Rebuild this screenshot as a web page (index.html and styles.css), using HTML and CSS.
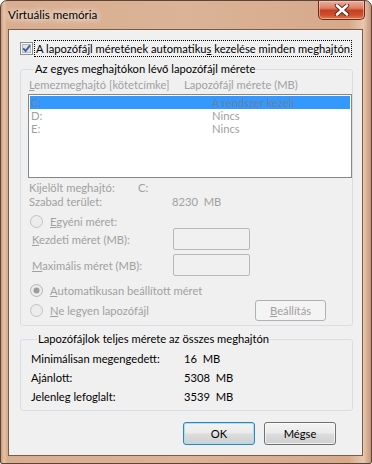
FILE: index.html
```html
<!DOCTYPE html>
<html lang="hu">
<head>
  <meta charset="UTF-8" />
  <title>Virtuális memória</title>
  <link rel="stylesheet" href="styles.css">
</head>
<body>
  <div class="window">
    <div class="titlebar">
      <span class="title">Virtuális memória</span>
      <span class="close">
        <svg width="16" height="12" viewBox="0 0 16 12">
          <path d="M3 1.5 L13 10.5 M13 1.5 L3 10.5" stroke="#5a2418" stroke-width="4.4" stroke-linecap="round"/>
          <path d="M3 1.5 L13 10.5 M13 1.5 L3 10.5" stroke="#fff" stroke-width="2.6" stroke-linecap="round"/>
        </svg>
      </span>
    </div>

    <div class="client">
      <div class="autorow">
        <svg class="check" width="13" height="13" viewBox="0 0 13 13">
          <rect x="0.5" y="0.5" width="12" height="12" fill="#f6f6f6" stroke="#8e8f8f"/>
          <rect x="2.5" y="2.5" width="8" height="8" fill="#dfe4ea" stroke="#b4b9bf"/>
          <path d="M3.2 6.4 L5.6 9 L10 3.4" fill="none" stroke="#4a5f97" stroke-width="1.9"/>
        </svg>
        <span class="focus">A lapozófájl méretének automatiku<u>s</u> kezelése minden meghajtón</span>
      </div>

      <fieldset class="group drives">
        <legend>Az egyes meghajtókon lévő lapozófájl mérete</legend>
        <div class="cols off">
          <span class="c1"><u>L</u>emezmeghajtó [kötetcímke]</span>
          <span>Lapozófájl mérete (MB)</span>
        </div>
        <ul class="list">
          <li class="sel"><span class="d">C:</span><span>A rendszer kezeli</span></li>
          <li><span class="d">D:</span><span>Nincs</span></li>
          <li><span class="d">E:</span><span>Nincs</span></li>
        </ul>

        <div class="info off">
          <div class="irow"><span class="k1">Kijelölt meghajtó:</span><span>C:</span></div>
          <div class="irow"><span class="k2">Szabad terület:</span><span>8230&nbsp; MB</span></div>
        </div>

        <div class="radio r-custom off">
          <svg width="13" height="13" viewBox="0 0 13 13"><circle cx="6.5" cy="6.5" r="6" fill="#ececec" stroke="#c0c0c0"/></svg>
          <span><u>E</u>gyéni méret:</span>
        </div>
        <div class="field f-init off">
          <span class="lbl"><u>K</u>ezdeti méret (MB):</span>
          <span class="box"></span>
        </div>
        <div class="field f-max off">
          <span class="lbl"><u>M</u>aximális méret (MB):</span>
          <span class="box"></span>
        </div>
        <div class="radio r-auto off">
          <svg width="13" height="13" viewBox="0 0 13 13"><circle cx="6.5" cy="6.5" r="6" fill="#ececec" stroke="#b4b4b4"/><circle cx="6.5" cy="6.5" r="3" fill="#9c9c9c"/></svg>
          <span><u>A</u>utomatikusan beállított méret</span>
        </div>
        <div class="radio r-none off">
          <svg width="13" height="13" viewBox="0 0 13 13"><circle cx="6.5" cy="6.5" r="6" fill="#ececec" stroke="#c0c0c0"/></svg>
          <span class="grow"><u>N</u>e legyen lapozófájl</span>
          <span class="btn disabled set"><u>B</u>eállítás</span>
        </div>
      </fieldset>

      <fieldset class="group totals">
        <legend>Lapozófájlok teljes mérete az összes meghajtón</legend>
        <div class="trow"><span class="k">Minimálisan megengedett:</span><span>16&nbsp; MB</span></div>
        <div class="trow"><span class="k">Ajánlott:</span><span>5308&nbsp; MB</span></div>
        <div class="trow"><span class="k">Jelenleg lefoglalt:</span><span>3539&nbsp; MB</span></div>
      </fieldset>

      <div class="buttons">
        <span class="btn default">OK</span>
        <span class="btn">Mégse</span>
      </div>
    </div>
  </div>
</body>
</html>
```

FILE: styles.css
```css
body{margin:0;width:372px;height:464px;overflow:hidden;background:#fff;font-family:Lato,"Liberation Sans",sans-serif;font-size:11.2px;color:#000;white-space:nowrap;}
u{text-decoration:underline;text-underline-offset:1px;}

.window{box-sizing:border-box;height:464px;padding:0 8px 8px 7px;border:1px solid #5b4538;border-radius:7px 7px 2px 2px;
  background:linear-gradient(to right,#c99a7d 0,#e6c3a8 3px,#d9ad8f 6px,#dcb397 50%,#d6a98b 94%,#e8c7ad 98%,#c49377 100%);}
.titlebar{height:28px;display:flex;justify-content:space-between;align-items:flex-start;}
.title{margin-top:6px;line-height:16px;font-size:11.6px;text-shadow:0 0 6px #fff,0 0 10px #fff;}
.close{width:45px;height:18px;display:flex;align-items:center;justify-content:center;border:1px solid #6b2a1c;border-top:none;border-radius:0 0 5px 5px;margin-right:-2px;
  background:linear-gradient(#eab0a0 0,#dc7d66 40%,#c5401f 52%,#cf5230 80%,#e07a52 100%);box-shadow:inset 0 0 0 1px rgba(255,210,190,.55);}

.client{box-sizing:border-box;height:427px;background:#f0f0f0;border:1px solid #7a5a48;}

.autorow{display:flex;align-items:center;height:17px;margin:10px 0 0 11px;}
.check{display:block;flex-shrink:0;margin-right:1px;}
.focus{line-height:15px;padding:0 1px;border:1px dotted #000;}

.group{margin:0 9px 0 11px;padding:0;border:1px solid #d5dfe5;border-radius:3px;min-width:0;}
.group legend{margin-left:6px;padding:0 1px;line-height:14px;}
.drives{margin-top:5px;padding:0 0 4px 7px;}
.off{color:#a0a0a0;}

.cols{display:flex;height:14px;line-height:14px;margin-top:2px;padding-left:1px;}
.cols .c1{width:155px;}

.list{list-style:none;margin:2px 0 0;padding:1px;height:80px;border:1px solid #828790;background:#fff;color:#a0a0a0;}
.list li{display:flex;height:13px;line-height:13px;padding-left:1px;}
.list li .d{width:181px;}
.list li.sel{background:#3399ff;color:#6f7f99;}

.info{margin-top:3px;}
.irow{display:flex;height:14px;line-height:14px;padding-left:1px;}
.k1{width:109px;}
.k2{width:143px;}

.radio{display:flex;align-items:center;padding-left:2px;}
.radio svg{display:block;flex-shrink:0;margin-right:7px;}
.r-custom{height:13px;margin-top:6px;}
.r-auto{height:14px;margin-top:7px;}
.r-none{height:22px;margin-top:2px;}
.grow{flex:1;}

.field{display:flex;align-items:center;height:22px;padding-left:4px;}
.f-max{margin-top:4px;}
.field .lbl{width:141px;}
.box{box-sizing:border-box;width:77px;height:22px;border:1px solid #b8b8b8;border-radius:2px;background:#f0f0f0;}

.btn{box-sizing:border-box;display:flex;align-items:center;justify-content:center;width:72px;height:23px;border:1px solid #707070;border-radius:3px;color:#000;
  background:linear-gradient(#f3f3f3 0,#ebebeb 48%,#dddddd 52%,#cfcfcf 100%);box-shadow:inset 0 0 0 1px rgba(255,255,255,.7);}
.btn.disabled{width:71px;height:21px;margin-right:26px;border-color:#adb2b5;background:#f4f4f4;color:#a0a0a0;box-shadow:none;}
.btn.default{border-color:#3c7fb1;box-shadow:inset 0 0 0 1px #9fe3fb;}

.totals{margin-top:6px;padding:0 0 4px 10px;}
.trow{display:flex;height:19px;line-height:19px;}
.trow:first-of-type{margin-top:3px;}
.trow .k{width:153px;}

.buttons{display:flex;justify-content:flex-end;gap:9px;margin:11px 26px 0 0;}
```
